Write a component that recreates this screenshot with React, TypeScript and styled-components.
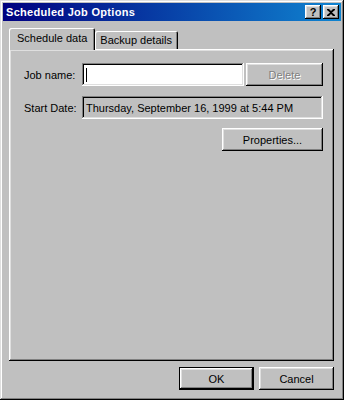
import styled, { createGlobalStyle } from 'styled-components';

const GlobalStyle = createGlobalStyle`
  html, body {
    margin: 0;
    padding: 0;
    background: #c0c0c0;
  }
  * {
    box-sizing: border-box;
  }
`;

const raised = `
  box-shadow: inset -1px -1px #000000, inset 1px 1px #ffffff, inset -2px -2px #808080, inset 2px 2px #dfdfdf;
`;

const sunken = `
  box-shadow: inset -1px -1px #ffffff, inset 1px 1px #808080, inset -2px -2px #dfdfdf, inset 2px 2px #000000;
`;

const Window = styled.div`
  width: 344px;
  height: 400px;
  padding: 3px;
  background: #c0c0c0;
  display: flex;
  flex-direction: column;
  font-family: "Liberation Sans", Arial, sans-serif;
  font-size: 11px;
  color: #000;
  box-shadow: inset -1px -1px #000000, inset 1px 1px #dfdfdf, inset -2px -2px #808080, inset 2px 2px #ffffff;
`;

const TitleBar = styled.div`
  height: 18px;
  display: flex;
  align-items: center;
  padding: 0 2px 0 3px;
  background: linear-gradient(to right, #000080, #1084d0);
  color: #fff;
`;

const Title = styled.span`
  flex: 1;
  font-weight: bold;
  font-size: 11px;
  letter-spacing: 0.3px;
`;

const CaptionButton = styled.button<{ $gap?: boolean }>`
  width: 16px;
  height: 14px;
  padding: 0;
  margin-left: ${(p) => (p.$gap ? '2px' : '0')};
  border: none;
  background: #c0c0c0;
  ${raised}
  display: flex;
  align-items: center;
  justify-content: center;
  font-family: "Liberation Sans", Arial, sans-serif;
  font-weight: bold;
  font-size: 11px;
  line-height: 1;
  color: #000;
`;

const Body = styled.div`
  flex: 1;
  display: flex;
  flex-direction: column;
  padding: 6px 7px 7px 6px;
`;

const TabStrip = styled.div`
  display: flex;
  align-items: flex-end;
  height: 22px;
  position: relative;
  z-index: 1;
`;

const Tab = styled.div<{ $active?: boolean }>`
  height: ${(p) => (p.$active ? '22px' : '18px')};
  padding: ${(p) => (p.$active ? '4px 8px 0 8px' : '3px 6px 0 5px')};
  margin-bottom: ${(p) => (p.$active ? '-1px' : '0')};
  background: #c0c0c0;
  border-top-left-radius: 2px;
  border-top-right-radius: 2px;
  box-shadow: inset 1px 1px #ffffff, inset -1px 0 #000000, inset -2px 0 #808080;
  white-space: nowrap;
`;

const Panel = styled.div`
  flex: 1;
  background: #c0c0c0;
  ${raised}
  padding: 14px 11px 0 15px;
  display: flex;
  flex-direction: column;
  gap: 10px;
`;

const Row = styled.div`
  display: flex;
  align-items: center;
`;

const Label = styled.span`
  width: 58px;
`;

const Field = styled.div<{ $grow?: boolean }>`
  height: 23px;
  flex: 1;
  background: ${(p) => (p.$grow ? '#ffffff' : '#c0c0c0')};
  ${sunken}
  display: flex;
  align-items: center;
  padding-left: 4px;
  white-space: nowrap;
`;

const Caret = styled.span`
  width: 1px;
  height: 14px;
  background: #000;
`;

const Button = styled.button<{ $width: number; $disabled?: boolean; $default?: boolean }>`
  width: ${(p) => p.$width}px;
  height: 23px;
  flex: none;
  border: none;
  padding: 0;
  background: #c0c0c0;
  ${(p) =>
    p.$default
      ? 'box-shadow: inset 0 0 0 1px #000000, inset -2px -2px #000000, inset 2px 2px #ffffff, inset -3px -3px #808080, inset 3px 3px #dfdfdf;'
      : raised}
  font-family: "Liberation Sans", Arial, sans-serif;
  font-size: 11px;
  color: ${(p) => (p.$disabled ? '#808080' : '#000000')};
  text-shadow: ${(p) => (p.$disabled ? '1px 1px #ffffff' : 'none')};
`;

const RightRow = styled.div`
  display: flex;
  justify-content: flex-end;
  margin-top: -1px;
`;

const Footer = styled.div`
  display: flex;
  justify-content: flex-end;
  gap: 5px;
  padding-top: 6px;
`;

const App = function() {
  return (
    <>
      <GlobalStyle />
      <Window>
        <TitleBar>
          <Title>Scheduled Job Options</Title>
          <CaptionButton>?</CaptionButton>
          <CaptionButton $gap>
            <svg width="8" height="7" viewBox="0 0 8 7">
              <path d="M0 0h2l2 2 2-2h2v1L5 3.5 8 6v1H6L4 5 2 7H0V6l3-2.5L0 1z" fill="#000" />
            </svg>
          </CaptionButton>
        </TitleBar>
        <Body>
          <TabStrip>
            <Tab $active>Schedule data</Tab>
            <Tab>Backup details</Tab>
          </TabStrip>
          <Panel>
            <Row>
              <Label>Job name:</Label>
              <Field $grow style={{ marginRight: 2 }}>
                <Caret />
              </Field>
              <Button $width={77} $disabled>Delete</Button>
            </Row>
            <Row>
              <Label>Start Date:</Label>
              <Field>Thursday, September 16, 1999 at 5:44 PM</Field>
            </Row>
            <RightRow>
              <Button $width={101}>Properties...</Button>
            </RightRow>
          </Panel>
          <Footer>
            <Button $width={75} $default>OK</Button>
            <Button $width={75}>Cancel</Button>
          </Footer>
        </Body>
      </Window>
    </>
  );
};

export default App;
